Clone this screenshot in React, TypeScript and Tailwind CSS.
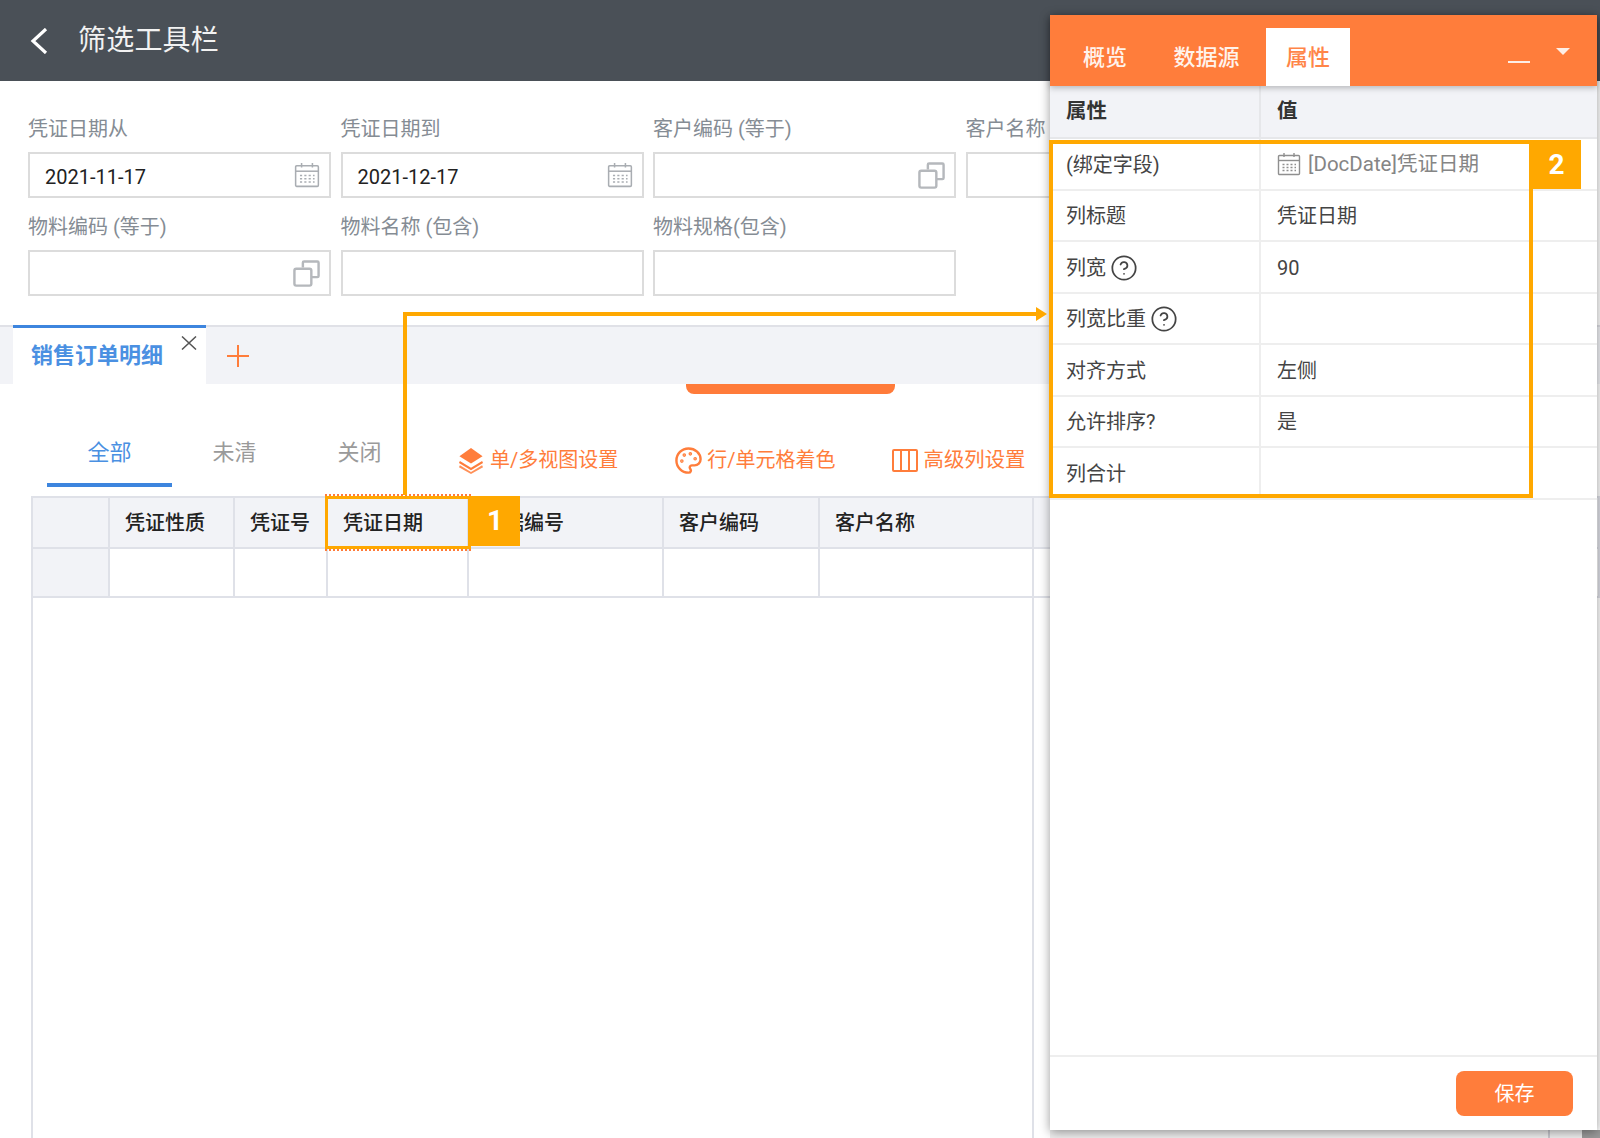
import React from "react";
import { CircleHelp, Palette } from "lucide-react";

function CalendarIcon({ className, color = "#a9adb2" }: { className?: string; color?: string }) {
  return (
    <svg viewBox="0 0 24 24" className={className} fill="none" stroke={color} strokeWidth="1.4">
      <rect x="1.5" y="3.5" width="21" height="19" rx="1" />
      <path d="M1.5 8.5h21" />
      <path d="M7 1v4M17 1v4" />
      <path
        d="M5.5 12.5h2M9.5 12.5h2M13.5 12.5h2M17.5 12.5h1.5M5.5 15.5h2M9.5 15.5h2M13.5 15.5h2M17.5 15.5h1.5M5.5 18.5h2M9.5 18.5h2M13.5 18.5h2M17.5 18.5h1.5"
        strokeWidth="1.5"
      />
    </svg>
  );
}

function CopyIcon() {
  return (
    <svg viewBox="0 0 24 24" className="w-[29px] h-[29px]" fill="none" stroke="#b5b8bc" strokeWidth="2">
      <path d="M9 7V3a1 1 0 0 1 1-1h11a1 1 0 0 1 1 1v11a1 1 0 0 1-1 1h-5" />
      <rect x="2" y="8" width="14" height="14" rx="1.5" />
    </svg>
  );
}

function LayersIcon() {
  return (
    <svg viewBox="0 0 26 28" className="w-[26px] h-[27px]" fill="#ff7d3b">
      <path d="M13 1 25 9.5 13 17 1 9.5Z" />
      <path d="M1.5 14.5 13 21.5 24.5 14.5 25.5 16.5 13 24 0.5 16.5Z" />
      <path d="M1.5 19 13 26 24.5 19 25.5 21 13 28 0.5 21Z" opacity="0.85" />
    </svg>
  );
}

function ColumnsIcon() {
  return (
    <svg viewBox="0 0 26 24" className="w-[26px] h-[25px]" fill="none" stroke="#ff7d3b" strokeWidth="2">
      <rect x="1" y="1.5" width="24" height="21" rx="1" />
      <path d="M9 1.5v21M17 1.5v21" />
    </svg>
  );
}

function Field({ label, value, icon }: { label: string; value?: string; icon?: React.ReactNode }) {
  return (
    <div className="flex flex-col">
      <div className="h-[24px] leading-[24px] text-[20px] text-[#858c94] whitespace-nowrap mb-[11px]">{label}</div>
      <div className="h-[46px] border-2 border-[#dcdcdc] flex items-center justify-between pl-[15px] pr-[8px] text-[20px] text-[#222]">
        <span className="pt-[3px]">{value}</span>
        {icon}
      </div>
    </div>
  );
}

const gridCols = "grid grid-cols-[77px_125px_93px_141px_195px_156px_214px_1fr]";
const headCell =
  "bg-[#f2f3f7] border-r-2 border-b-2 border-[#dfe1e8] flex items-center pl-[15px] text-[20px] font-medium text-[#222] whitespace-nowrap";
const bodyCell = "bg-white border-r-2 border-b-2 border-[#dfe1e8]";

const heads = ["", "凭证性质", "凭证号", "凭证日期", "单据编号", "客户编码", "客户名称", ""];

const rows: { k: React.ReactNode; v?: React.ReactNode }[] = [
  {
    k: "(绑定字段)",
    v: (
      <span className="flex items-center text-[#858585] text-[20.5px]">
        <CalendarIcon className="w-[24px] h-[24px] mr-[7px] -mt-[2px]" color="#8f8f8f" />
        [DocDate]凭证日期
      </span>
    ),
  },
  { k: "列标题", v: "凭证日期" },
  {
    k: (
      <span className="flex items-center gap-[4px]">
        列宽 <CircleHelp className="w-[28px] h-[28px] text-[#444]" strokeWidth={1.5} />
      </span>
    ),
    v: "90",
  },
  {
    k: (
      <span className="flex items-center gap-[4px]">
        列宽比重 <CircleHelp className="w-[28px] h-[28px] text-[#444]" strokeWidth={1.5} />
      </span>
    ),
  },
  { k: "对齐方式", v: "左侧" },
  { k: "允许排序?", v: "是" },
  { k: "列合计" },
];

export default function App() {
  return (
    <div className="relative w-[1600px] h-[1138px] overflow-hidden bg-white flex flex-col font-['Roboto','Noto_Sans_CJK_SC',sans-serif]">
      {/* top bar */}
      <header className="h-[81px] shrink-0 bg-[#4a5057] flex items-center pl-[30px]">
        <svg viewBox="0 0 18 26" className="w-[18px] h-[26px] mt-[1px]" fill="none" stroke="#fff" strokeWidth="3.2">
          <path d="M16 1 3 13l13 12" />
        </svg>
        <h1 className="ml-[30px] text-[28px] font-normal text-[#f2f2f2] whitespace-nowrap tracking-[0.2px]">筛选工具栏</h1>
      </header>

      {/* filters */}
      <section className="shrink-0 pt-[36px] pb-[29px] pl-[28px] grid grid-cols-[303px_303px_303px_303px] gap-x-[9.5px] gap-y-[17px]">
        <Field label="凭证日期从" value="2021-11-17" icon={<CalendarIcon className="w-[26px] h-[26px] mr-[1px]" />} />
        <Field label="凭证日期到" value="2021-12-17" icon={<CalendarIcon className="w-[26px] h-[26px] mr-[1px]" />} />
        <Field label="客户编码 (等于)" icon={<CopyIcon />} />
        <Field label="客户名称" />
        <Field label="物料编码 (等于)" icon={<CopyIcon />} />
        <Field label="物料名称 (包含)" />
        <Field label="物料规格(包含)" />
      </section>

      {/* page tabs */}
      <div className="shrink-0 h-[59px] bg-[#f2f3f7] border-t-2 border-[#e0e1e7] flex pl-[13px]">
        <div className="relative w-[193px] -mt-[2px] bg-white border-t-[3px] border-[#3d85de] flex items-center pl-[18px] pb-[2px] text-[22px] font-bold text-[#4a90e2] whitespace-nowrap">
          销售订单明细
          <svg viewBox="0 0 16 14" className="absolute left-[168px] top-[8px] w-[16px] h-[14px]" fill="none" stroke="#555" strokeWidth="1.5">
            <path d="M1 0.5 15 13.5M15 0.5 1 13.5" />
          </svg>
        </div>
        <svg viewBox="0 0 24 24" className="ml-[20px] mt-[17px] w-[24px] h-[24px]" fill="none" stroke="#ff7d3b" strokeWidth="2">
          <path d="M12 1v22M1 12h22" />
        </svg>
      </div>

      <div className="shrink-0 ml-[686px] w-[209px] h-[10px] bg-[#ff7b3a] rounded-b-lg" />

      {/* view tabs and actions */}
      <div className="shrink-0 h-[93px] pl-[47px] flex items-end">
        <div className="w-[125px] h-[50px] border-b-4 border-[#3d85de] text-center leading-[32px] text-[22px] text-[#4a90e2]">全部</div>
        <div className="w-[125px] h-[50px] text-center leading-[32px] text-[22px] text-[#9a9a9a]">未清</div>
        <div className="w-[125px] h-[50px] text-center leading-[32px] text-[22px] text-[#9a9a9a]">关闭</div>
        <div className="h-[54px] ml-[36px] flex items-center text-[20px] text-[#ff7d3b] whitespace-nowrap">
          <LayersIcon />
          <span className="ml-[6px]">单/多视图设置</span>
          <Palette className="ml-[56px] w-[29px] h-[29px]" strokeWidth={2} />
          <span className="ml-[4px]">行/单元格着色</span>
          <span className="ml-[56px]">
            <ColumnsIcon />
          </span>
          <span className="ml-[6px] text-[20.4px]">高级列设置</span>
        </div>
      </div>

      {/* data table */}
      <div className="flex-1 mt-[9px] ml-[31px] flex flex-col border-l-2 border-t-2 border-[#dfe1e8]">
        <div className={`${gridCols} h-[51px]`}>
          {heads.map((h, i) => (
            <div key={i} className={headCell}>
              {h}
            </div>
          ))}
        </div>
        <div className={`${gridCols} h-[49px]`}>
          {heads.map((_, i) => (
            <div key={i} className={i === 0 ? "bg-[#f2f3f7] border-r-2 border-b-2 border-[#dfe1e8]" : bodyCell} />
          ))}
        </div>
        <div className="flex-1 w-[1001px] border-r-2 border-[#dfe1e8]" />
      </div>

      {/* strip behind the bottom right of the panel */}
      <div className="absolute left-[1050px] right-0 bottom-0 h-[8px] bg-[#eeeeee] flex">
        <div className="ml-[498px] w-[2px] bg-[#c8c8cf]" />
        <div className="ml-auto w-[18px] bg-[#9a9a9a]" />
      </div>

      {/* property panel */}
      <aside className="absolute left-[1050px] top-[15px] w-[547px] h-[1115px] bg-white shadow-[0_2px_10px_rgba(0,0,0,0.4)] flex flex-col">
        <div className="relative shrink-0 h-[71px] bg-[#ff7d3b] flex items-end pl-[11px] text-[22px] font-medium text-[#fff3ec] shadow-[0_2px_6px_rgba(0,0,0,0.25)]">
          <div className="w-[88px] h-[58px] flex items-center justify-center">概览</div>
          <div className="w-[117px] h-[58px] flex items-center justify-center pr-[2px]">数据源</div>
          <div className="w-[84px] h-[58px] bg-white flex items-center justify-center text-[#ff8548]">属性</div>
          <div className="absolute left-[458px] top-[46px] w-[22px] h-[2px] bg-[#fdeee6]" />
          <div className="absolute left-[506px] top-[33px] w-0 h-0 border-x-[7px] border-x-transparent border-t-[7px] border-t-[#fdeee6]" />
        </div>

        <div className="shrink-0 h-[53px] grid grid-cols-[211px_1fr] bg-[#f2f3f7] border-b-2 border-[#e6e7ea] text-[20.5px] font-bold text-[#333]">
          <div className="border-r-2 border-[#e6e7ea] flex items-center pl-[16px]">属性</div>
          <div className="flex items-center pl-[16px]">值</div>
        </div>

        {rows.map((r, i) => (
          <div key={i} className="shrink-0 h-[51.5px] grid grid-cols-[211px_1fr] border-b-2 border-[#eeeeee] text-[20px] text-[#444]">
            <div className="border-r-2 border-[#eeeeee] flex items-center pl-[16px] pt-[2px] whitespace-nowrap">{r.k}</div>
            <div className="flex items-center pl-[16px] pt-[2px] whitespace-nowrap">{r.v}</div>
          </div>
        ))}

        <div className="mt-auto shrink-0 h-[75px] border-t-2 border-[#eeeeee] flex justify-end items-start pt-[14px] pr-[24px]">
          <div className="w-[117px] h-[45px] rounded-lg bg-[#ff7d3b] flex items-center justify-center text-[20px] text-white">保存</div>
        </div>
      </aside>

      {/* annotation 1: highlighted column */}
      <div className="absolute left-[325px] top-[494px] w-[146px] h-[57px] border-y-2 border-dotted border-[#ff7b3a]" />
      <div className="absolute left-[325px] top-[496px] w-[146px] h-[53px] border-[3.5px] border-[#ffa800]" />
      <div className="absolute left-[470px] top-[496px] w-[50px] h-[50px] bg-[#ffa800] flex items-center justify-center text-[28px] font-bold text-white">1</div>

      {/* connector */}
      <div className="absolute left-[403px] top-[312px] w-[4px] h-[183px] bg-[#ffa800]" />
      <div className="absolute left-[403px] top-[312px] w-[634px] h-[4px] bg-[#ffa800]" />
      <div className="absolute left-[1036px] top-[307px] w-0 h-0 border-y-[7px] border-y-transparent border-l-[11px] border-l-[#ffa800]" />

      {/* annotation 2: highlighted rows */}
      <div className="absolute left-[1049px] top-[140px] w-[484px] h-[358px] border-4 border-[#ffa800]" />
      <div className="absolute left-[1529px] top-[140px] w-[52px] h-[49px] bg-[#ffa800] flex items-center justify-center pl-[3px] text-[28px] font-bold text-white">2</div>
    </div>
  );
}
